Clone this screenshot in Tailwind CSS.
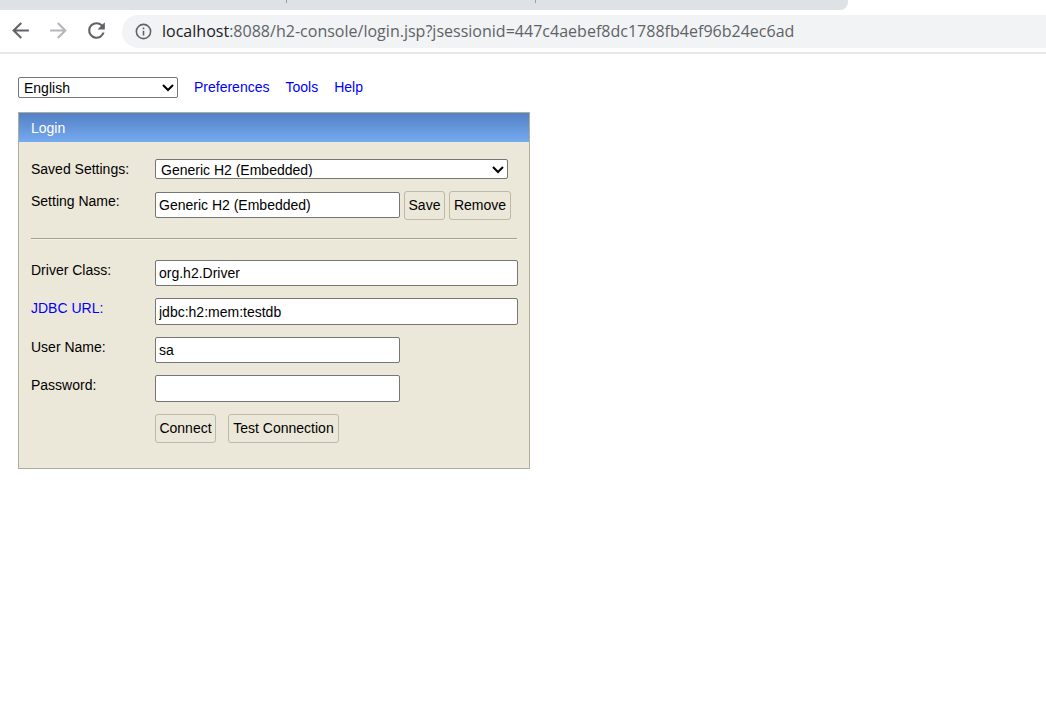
<!DOCTYPE html>
<html lang="en">
<head>
    <meta charset="UTF-8">
    <title>H2 Console</title>
    <script src="https://cdn.jsdelivr.net/npm/@tailwindcss/browser@4"></script>
</head>
<body class="h-[725px] overflow-hidden bg-white font-['Liberation_Sans',sans-serif] text-[14px] text-black">

    <!-- browser chrome -->
    <div class="h-[54px] border-b-2 border-[#e8e9eb]">
        <div class="relative h-[10px] w-[848px] rounded-br-[8px] bg-[#dee1e6]">
            <span class="absolute left-[286px] top-0 h-[3px] w-px bg-[#9a9da1]"></span>
            <span class="absolute left-[535px] top-0 h-[3px] w-px bg-[#9a9da1]"></span>
        </div>
        <div class="flex h-[42px] items-start pt-[5px]">
            <div class="flex w-[122px] items-center pt-[3px]">
                <svg class="ml-[8px]" width="25" height="25" viewBox="0 0 24 24"><path fill="#5f6368" d="M20 11H7.83l5.59-5.59L12 4l-8 8 8 8 1.41-1.41L7.83 13H20v-2z"/></svg>
                <svg class="ml-[13px]" width="25" height="25" viewBox="0 0 24 24"><path fill="#b4b6b9" d="M4 11h12.17l-5.59-5.59L12 4l8 8-8 8-1.41-1.41L16.17 13H4v-2z"/></svg>
                <svg class="ml-[13px]" width="25" height="25" viewBox="0 0 24 24"><path fill="#5f6368" d="M17.65 6.35A7.96 7.96 0 0 0 12 4a8 8 0 1 0 7.73 10h-2.08A6 6 0 1 1 12 6c1.66 0 3.14.69 4.22 1.78L13 11h7V4l-2.35 2.35z"/></svg>
            </div>
            <div class="flex h-[33px] flex-1 items-center rounded-l-full bg-[#f1f3f4] pl-[12px]">
                <svg width="19" height="19" viewBox="0 0 24 24"><path fill="#5f6368" d="M11 7h2v2h-2V7zm0 4h2v6h-2v-6zm1-9a10 10 0 1 0 0 20 10 10 0 0 0 0-20zm0 18a8 8 0 1 1 0-16 8 8 0 0 1 0 16z"/></svg>
                <span class="ml-[9px] whitespace-nowrap font-['Open_Sans',sans-serif] text-[16.05px] text-[#5f6368]"><span class="text-[#202124]">localhost</span>:8088/h2-console/login.jsp?jsessionid=447c4aebef8dc1788fb4ef96b24ec6ad</span>
            </div>
        </div>
    </div>

    <div class="pl-[18px] pt-[23px]">
        <!-- top toolbar -->
        <div class="flex h-[21px] items-center">
            <div class="relative h-[21px] w-[160px]">
                <select class="h-full w-full appearance-none rounded-[2px] border border-[#767676] bg-white pb-[1px] pl-[5px] text-[14px]">
                    <option>English</option>
                </select>
                <svg class="absolute right-[4px] top-[6px]" width="12" height="9" viewBox="0 0 12 9"><path d="M1 2l5 5 5-5" fill="none" stroke="#000" stroke-width="2"/></svg>
            </div>
            <a class="ml-[16px] text-[#0000ff]" href="#">Preferences</a>
            <a class="ml-[16px] text-[#0000ff]" href="#">Tools</a>
            <a class="ml-[16px] text-[#0000ff]" href="#">Help</a>
        </div>

        <!-- login panel -->
        <div class="mt-[14px] h-[357px] w-[512px] border border-[#b0ad9e] bg-[#ece8d9]">
            <div class="flex h-[29px] items-center bg-gradient-to-b from-[#5480c4] to-[#75abef] pl-[12px] pt-[1px] text-white">Login</div>

            <div class="pl-[12px] pt-[17px]">
                <div class="flex h-[20px] items-center">
                    <label class="w-[124px]">Saved Settings:</label>
                    <div class="relative h-[20px] w-[353px]">
                        <select class="h-full w-full appearance-none rounded-[2px] border border-[#767676] bg-white pb-[1px] pl-[5px] text-[14px]">
                            <option>Generic H2 (Embedded)</option>
                        </select>
                        <svg class="absolute right-[4px] top-[6px]" width="12" height="9" viewBox="0 0 12 9"><path d="M1 2l5 5 5-5" fill="none" stroke="#000" stroke-width="2"/></svg>
                    </div>
                </div>

                <div class="mt-[12px] flex items-start">
                    <label class="w-[124px] pt-[1px] leading-[18px]">Setting Name:</label>
                    <input class="mt-[1px] h-[26px] w-[245px] rounded-[2px] border border-[#767676] bg-white pl-[3px]" value="Generic H2 (Embedded)">
                    <button class="ml-[4px] h-[29px] w-[41px] rounded-[3px] border border-[#bcb9a8] bg-[#ece8d9]">Save</button>
                    <button class="ml-[4px] h-[29px] w-[62px] rounded-[3px] border border-[#bcb9a8] bg-[#ece8d9]">Remove</button>
                </div>

                <hr class="mt-[18px] h-[2px] w-[486px] border-0 border-t border-[#a3a091] bg-[#f3f0e4]">

                <div class="mt-[20px] flex items-start">
                    <label class="w-[124px] pt-[1px] leading-[18px]">Driver Class:</label>
                    <input class="h-[26px] w-[363px] rounded-[2px] border border-[#767676] bg-white pl-[3px]" value="org.h2.Driver">
                </div>
                <div class="mt-[12px] flex items-start">
                    <label class="w-[124px] pt-[1px] leading-[18px] text-[#0000ff]">JDBC URL:</label>
                    <input class="h-[27px] w-[363px] rounded-[2px] border border-[#767676] bg-white pl-[3px]" value="jdbc:h2:mem:testdb">
                </div>
                <div class="mt-[12px] flex items-start">
                    <label class="w-[124px] pt-[1px] leading-[18px]">User Name:</label>
                    <input class="h-[26px] w-[245px] rounded-[2px] border border-[#767676] bg-white pl-[3px]" value="sa">
                </div>
                <div class="mt-[12px] flex items-start">
                    <label class="w-[124px] pt-[1px] leading-[18px]">Password:</label>
                    <input type="password" class="h-[27px] w-[245px] rounded-[2px] border border-[#767676] bg-white pl-[3px]">
                </div>
                <div class="mt-[12px] flex pl-[124px]">
                    <button class="h-[29px] w-[61px] rounded-[3px] border border-[#bcb9a8] bg-[#ece8d9]">Connect</button>
                    <button class="ml-[12px] h-[29px] w-[111px] rounded-[3px] border border-[#bcb9a8] bg-[#ece8d9]">Test Connection</button>
                </div>
            </div>
        </div>
    </div>

</body>
</html>
